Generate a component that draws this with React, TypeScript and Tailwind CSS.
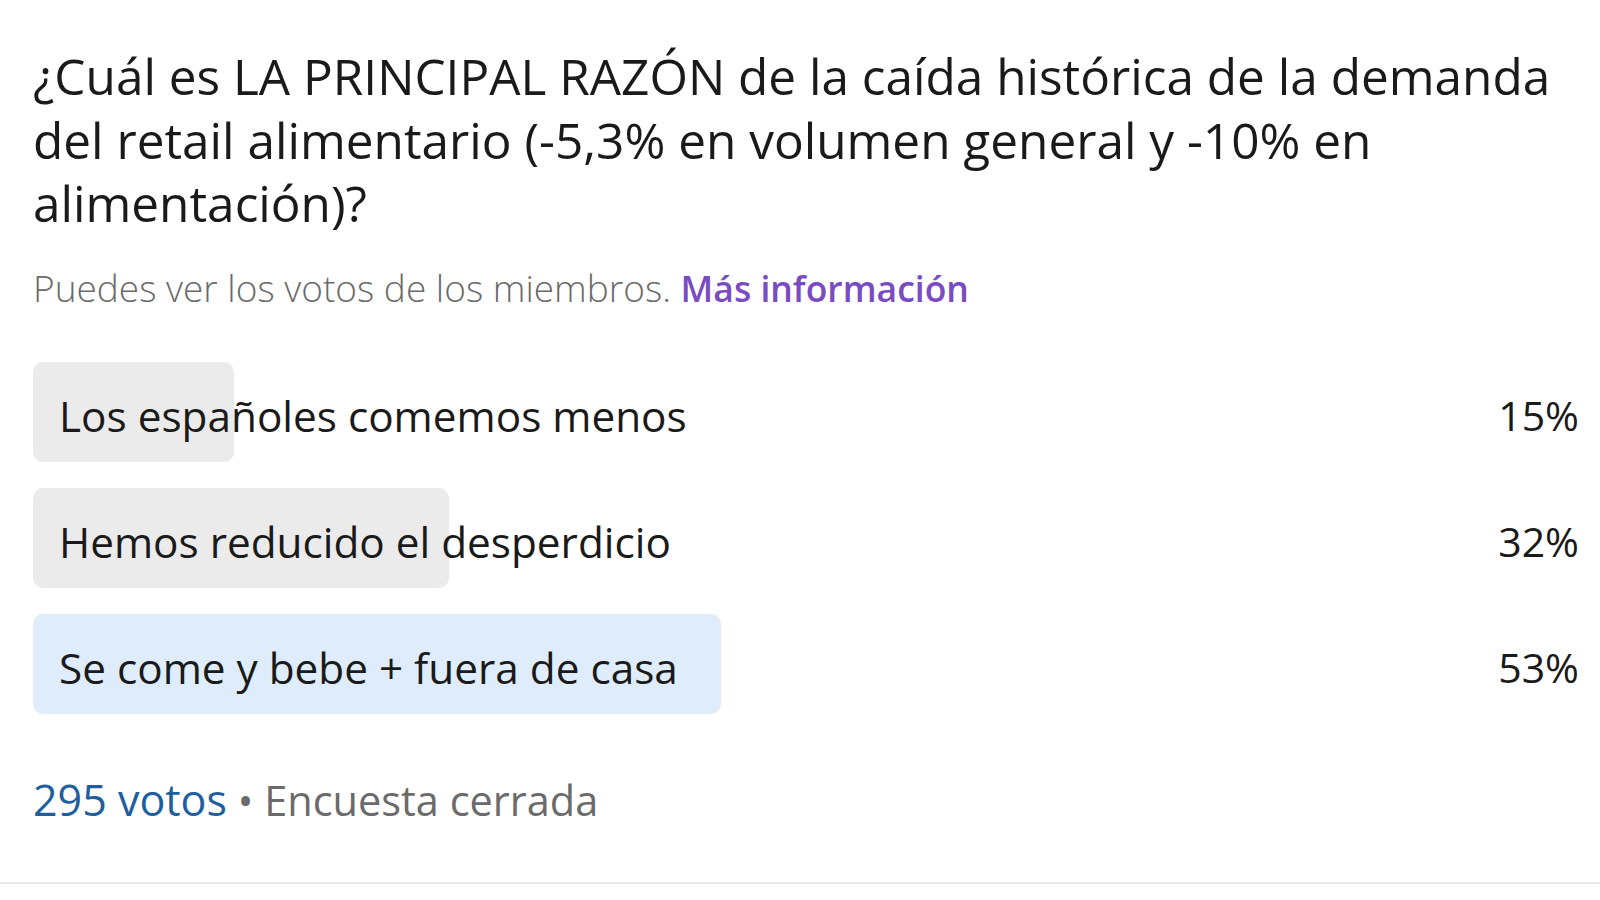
import React from "react";

const options = [
	{ label: "Los españoles comemos menos", pct: "15%", width: "15.5%", winner: false },
	{ label: "Hemos reducido el desperdicio", pct: "32%", width: "32%", winner: false },
	{ label: "Se come y bebe + fuera de casa", pct: "53%", width: "53%", winner: true },
];

const App = () => {
	return (
		<div className="w-full h-[900px] bg-white font-['Open_Sans',sans-serif] overflow-hidden">
			<div className="pl-[33px] pr-[21px] pt-[45px] border-b-2 border-[#e8e8e8] pb-[50px]">
				<h1 className="text-[49.5px] leading-[63.5px] text-[#1a1a1a] font-normal">
					¿Cuál es LA PRINCIPAL RAZÓN de la caída histórica de la demanda del retail
					alimentario (-5,3% en volumen general y -10% en alimentación)?
				</h1>
				<p className="mt-[32px] leading-[40px] text-[#6b6b6b]">
					<span className="text-[37px] font-light">Puedes ver los votos de los miembros. </span>
					<span className="text-[35.5px] text-[#7a4bc2] font-semibold">Más información</span>
				</p>
				<div className="mt-[46px] flex flex-col gap-[26px]">
					{options.map((opt, index) => (
						<div key={index} className="flex items-center h-[100px]">
							<div className="relative flex-1 h-full flex items-center">
								<div
									className={
										opt.winner
											? "absolute left-0 top-0 h-full rounded-[10px] bg-[#deecfb]"
											: "absolute left-0 top-0 h-full rounded-[10px] bg-[#ebebeb]"
									}
									style={{ width: opt.width }}
								/>
								<span className="relative pl-[26px] pt-[8px] text-[42.3px] text-[#1a1a1a]">
									{opt.label}
								</span>
							</div>
							<span className="w-[247px] pt-[8px] text-right text-[41px] text-[#1a1a1a]">
								{opt.pct}
							</span>
						</div>
					))}
				</div>
				<div className="mt-[64px] leading-[44px]">
					<span className="text-[43px] text-[#1f5f9e]">295 votos</span>
					<span className="text-[41.5px] text-[#6b6b6b]"> • Encuesta cerrada</span>
				</div>
			</div>
		</div>
	);
};

export default App;
